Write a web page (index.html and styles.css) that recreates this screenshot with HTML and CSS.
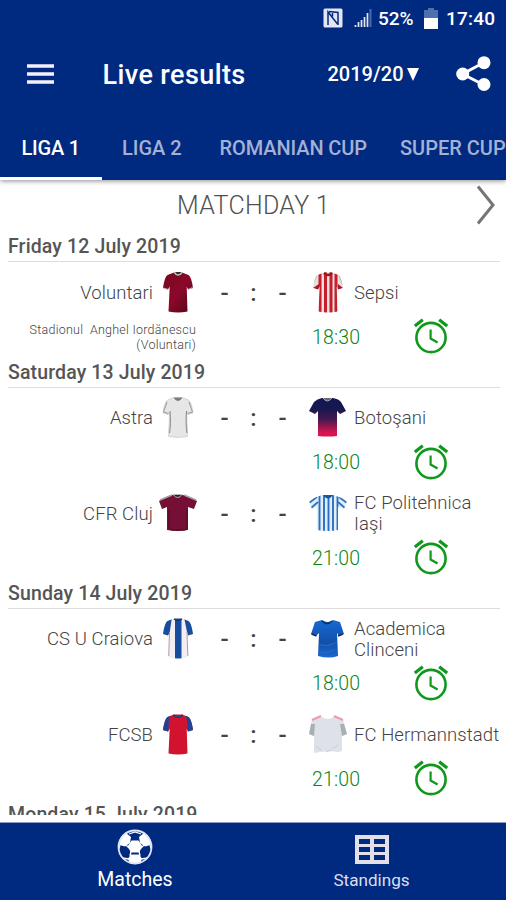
FILE: index.html
```html
<!DOCTYPE html>
<html lang="en">
<head>
<meta charset="utf-8">
<title>Live results</title>
<link rel="stylesheet" href="styles.css">
</head>
<body>
<svg class="defs" aria-hidden="true">
  <defs>
    <symbol id="alarm" viewBox="0 0 36 36">
      <g fill="none" stroke="#0f981b">
        <circle cx="18" cy="19.5" r="14.6" stroke-width="2.6"/>
        <path d="M17.6 11.5v9l7 4" stroke-width="2.2"/>
        <path d="M1.8 8 9.8 1.8M34.2 8 26.2 1.8" stroke-width="3.2"/>
      </g>
    </symbol>
    <linearGradient id="sunset" x1="0" y1="0" x2="0" y2="1">
      <stop offset=".25" stop-color="#141850"/><stop offset=".55" stop-color="#42184f"/><stop offset=".9" stop-color="#da1550"/>
    </linearGradient>
    <linearGradient id="wine" x1="0" y1="0" x2="1" y2="1">
      <stop offset="0" stop-color="#72091f"/><stop offset=".5" stop-color="#8c082a"/><stop offset="1" stop-color="#520516"/>
    </linearGradient>
    <linearGradient id="sky" x1="0" y1="0" x2="0" y2="1">
      <stop offset="0" stop-color="#1769d2"/><stop offset=".6" stop-color="#1250aa"/><stop offset="1" stop-color="#1769d2"/>
    </linearGradient>
    <path id="slim" d="M16 1.500h8l6.500 2.500q3 2 4.500 13l-5 1.500-1.300-3 .8 25q-9.500 2-19 0l1.200-25-1.700 3-5-1.500q1.500-11 4.500-13z"/>
    <clipPath id="slimClip"><use href="#slim"/></clipPath>
    <path id="wide" d="M14 3h11q8 2 14 6l-3 8-6-2v23q-10 2-21 0V15l-5 2-3-8q6-4 13-6z"/>
    <clipPath id="wideClip"><use href="#wide"/></clipPath>
  </defs>
</svg>
<div class="app">
  <header class="header">
    <div class="status">
      <svg width="20" height="20" viewBox="0 0 20 20"><rect x=".5" y=".5" width="19" height="19" rx="1.500" fill="#e3e5f2"/><path d="M5 17V4l9.500 12M6 3.500l9 1V17M9.500 5v3.500" fill="none" stroke="#002a80" stroke-width="1.500"/></svg>
      <svg class="signal" width="18" height="18" viewBox="0 0 18 18"><path d="M1.500 18v-2M4.500 18v-5M7.500 18V11M10.500 18V8M13.500 18V4" stroke="#e3e5f2" stroke-width="1.700"/><path d="M16.500 18V0" stroke="#4a68a8" stroke-width="2"/></svg>
      <span class="percent">52%</span>
      <svg class="battery" width="14" height="21" viewBox="0 0 14 21"><path d="M0 2h4V0h6v2h4v9H0z" fill="#4f70ad"/><path d="M0 10h14v11H0z" fill="#fff"/></svg>
      <span class="clock">17:40</span>
    </div>
    <div class="toolbar">
      <svg class="menu" width="27" height="20" viewBox="0 0 27 20"><path d="M0 2h27M0 10h27M0 18h27" stroke="#f5effa" stroke-width="3.600"/></svg>
      <h1>Live results</h1>
      <div class="season"><span>2019/20</span><svg width="12" height="13" viewBox="0 0 12 13"><path d="M0 0h12L6 13z" fill="#fff"/></svg></div>
      <svg class="share" width="35" height="36" viewBox="0 0 35 36"><path d="M28 6.500 6.500 18 28 29" fill="none" stroke="#fff" stroke-width="3"/><g fill="#fff"><circle cx="28" cy="6.700" r="6.500"/><circle cx="6.700" cy="18" r="6.500"/><circle cx="28" cy="28.500" r="6.500"/></g></svg>
    </div>
    <nav class="tabs">
      <span class="tab active">LIGA 1</span>
      <span class="tab liga2">LIGA 2</span>
      <span class="tab romanian">ROMANIAN CUP</span>
      <span class="tab super">SUPER CUP</span>
    </nav>
  </header>

  <main class="content">
    <div class="matchday"><span>MATCHDAY 1</span>
      <svg class="next" width="20" height="40" viewBox="0 0 20 40"><path d="M2 1.500 17 20 2 38.500" fill="none" stroke="#757575" stroke-width="3"/></svg>
    </div>

    <h2 class="d1">Friday 12 July 2019</h2>
    <article class="match">
      <div class="teams">
        <span class="home">Voluntari</span>
        <svg class="shirt" viewBox="0 0 40 42"><use href="#slim" fill="url(#wine)"/><path d="m5.500 17 4.500 1.500M34.500 16.500l-4.500 2" stroke="#d9aeb8" stroke-width="1"/><path d="M16 1q4 6 8.500 0" fill="#333" stroke="#c7c2bb" stroke-width="1.500"/></svg>
        <span class="score"><i>-</i><i>:</i><i>-</i></span>
        <svg class="shirt" viewBox="0 0 40 42"><g clip-path="url(#slimClip)"><path d="M0 0h40v42H0z" fill="#e8dfe0"/><path d="M12 0v42M17.500 0v42M23 0v42M28 0v42" stroke="#c51f2b" stroke-width="3"/><path d="m5 17 6 2v-6zM35 17l-5 2v-6z" fill="#a91926"/><path d="M4 14 9 4M35 14 31 4" stroke="#bdb8b8" stroke-width="1.500"/></g><path d="M16 2q4 4 8 0" fill="none" stroke="#981a22" stroke-width="2.500"/></svg>
        <span class="away sepsi">Sepsi</span>
      </div>
      <div class="info"><span class="venue">Stadionul&nbsp; Anghel Iordănescu<br>(Voluntari)</span><time>18:30</time><svg class="alarm"><use href="#alarm"/></svg></div>
    </article>

    <h2 class="d2">Saturday 13 July 2019</h2>
    <article class="match">
      <div class="teams">
        <span class="home">Astra</span>
        <svg class="shirt" viewBox="0 0 40 42"><use href="#slim" fill="#e6e6e6" stroke="#c8c8c8" stroke-width=".7"/><path d="M12 15q1 14-.5 22M28.500 15q-1 14 .5 22" fill="none" stroke="#888" stroke-width="1"/><path d="m9 6-3.500 10 5 1.500M31 6l3.500 10-5 1.500" fill="none" stroke="#999" stroke-width="1"/><path d="M16 2q4 5 8 0z" fill="#777" stroke="#888"/></svg>
        <span class="score"><i>-</i><i>:</i><i>-</i></span>
        <svg class="shirt" viewBox="0 0 40 42"><path d="M14 2h11q6 1 8 4l5 9-6 3-3-3v25q-9 1-19 0V15l-3 3-6-3 5-9q3-3 8-4z" fill="url(#sunset)"/><path d="M15 2q4 6 9 0" fill="#6b6470" stroke="#aaa" stroke-width="1"/></svg>
        <span class="away botosani">Botoşani</span>
      </div>
      <div class="info"><span class="venue"></span><time>18:00</time><svg class="alarm"><use href="#alarm"/></svg></div>
    </article>
    <article class="match">
      <div class="teams">
        <span class="home">CFR Cluj</span>
        <svg class="shirt" viewBox="0 0 40 42"><use href="#wide" fill="#760f36"/><path d="m2 8 12-5M26 3l12 5" stroke="#aaa1a5" stroke-width="1.500"/><path d="M11 18v18l2 2h14l2-2V18" fill="none" stroke="#4e0923" stroke-width="1"/><path d="M15 2.500q5 6 9 0z" fill="#222" stroke="#bdb6b9" stroke-width="1"/></svg>
        <span class="score"><i>-</i><i>:</i><i>-</i></span>
        <svg class="shirt" viewBox="0 0 40 42"><g clip-path="url(#wideClip)"><path d="M0 0h40v42H0z" fill="#e2effa"/><path d="M11.500 2v40M16 2v40M20.500 2v40M25 2v40M29.500 2v40" stroke="#2970c0" stroke-width="1.900"/><path d="m1 11 8-6M3 16l7-6M39 11l-8-6M37 16l-7-6" stroke="#3172bb" stroke-width="1.800"/></g><path d="M15 3q5 7 10 0z" fill="#1b579e"/></svg>
        <span class="away iasi">FC Politehnica<br>Iaşi</span>
      </div>
      <div class="info"><span class="venue"></span><time>21:00</time><svg class="alarm"><use href="#alarm"/></svg></div>
    </article>

    <h2 class="d3">Sunday 14 July 2019</h2>
    <article class="match">
      <div class="teams">
        <span class="home">CS U Craiova</span>
        <svg class="shirt" viewBox="0 0 40 42"><g clip-path="url(#slimClip)"><path d="M0 0h40v42H0z" fill="#f1eff4"/><path d="M17 0h6.500v42h-6.500zM0 0h14L11 20H3zM40 0H26l4 20h7z" fill="#174d9c"/></g><path d="m11.500 15-.8 24M29 15l.8 24" stroke="#b79aa0" stroke-width="1"/><path d="M16 2q4 3 8 0" stroke="#16356b" fill="none" stroke-width="1.500"/></svg>
        <span class="score"><i>-</i><i>:</i><i>-</i></span>
        <svg class="shirt" viewBox="0 0 40 42"><path d="M14 3q6 4 11 0l7 2 4 12-5 2-2-3 1 23q-9 3-20 0l1-23-3 3-5-2 4-12z" fill="url(#sky)"/><path d="M14 4q5 5 10 0" fill="none" stroke="#102d57" stroke-width="1.500"/><path d="m30 19 5-2M3.500 17l5 2" stroke="#153157" stroke-width="1.500"/><path d="M11 27q8 4 18-2M11 35q8 2 16-2" fill="none" stroke="#2a6cc5" stroke-width="1"/></svg>
        <span class="away academica">Academica<br>Clinceni</span>
      </div>
      <div class="info"><span class="venue"></span><time>18:00</time><svg class="alarm"><use href="#alarm"/></svg></div>
    </article>
    <article class="match">
      <div class="teams">
        <span class="home">FCSB</span>
        <svg class="shirt" viewBox="0 0 40 42"><g clip-path="url(#slimClip)"><path d="M0 0h40v42H0z" fill="#d1132f"/><path d="M0 0h14q-5 8-3 19H2zM40 0H26q5 8 3 19h9z" fill="#1d4495"/></g><path d="M15 2q5 4 10 0" fill="none" stroke="#293d77" stroke-width="1.700"/></svg>
        <span class="score"><i>-</i><i>:</i><i>-</i></span>
        <svg class="shirt" viewBox="0 0 40 42"><path d="M12 3q8 6 15 0l8 3 4 15-5 2v15l-4 1q-10-2-24 1V23l-5-2L4 6z" fill="#dfe1e8"/><path d="M3 11 1 21l5 2 1-12zM36 11l3 10-5 2-2-12z" fill="#a9b0b5"/><path d="m4 7 9-4M26 3l9 4" stroke="#ec9da9" stroke-width="2"/><path d="m8 33 5 4M30 32l-6 4M18 39l5-2" stroke="#c8ccd6"/></svg>
        <span class="away hermann">FC Hermannstadt</span>
      </div>
      <div class="info"><span class="venue"></span><time>21:00</time><svg class="alarm"><use href="#alarm"/></svg></div>
    </article>
    <h2 class="d4">Monday 15 July 2019</h2>
  </main>

  <footer class="bottom">
    <div class="item matches">
      <svg width="36" height="36" viewBox="0 0 36 36"><defs><clipPath id="ball"><circle cx="18" cy="18" r="17.200"/></clipPath></defs><g clip-path="url(#ball)" fill="#fff"><path d="m14.500 11.500h7l4 6-3.500 6h-8l-3.500-6z"/><path d="m3 6 6-2 5 4-1 6-5 3.500-5.500-1.500-1.500-5zM33 6l-6-2-5 4 1 6 5 3.500 5.500-1.500 1.500-5z"/><path d="m14 25.500h8l3 4-2 6H13l-2-6z"/><path d="m9 16 3 3M27 16l-3 3M14 22l-1 5M22 22l1 5M12 5l6-2 6 2M3 16l-2 6M33 16l2 6M5 29l7 1M31 29l-7 1" fill="none" stroke="#fff" stroke-width="1.300"/></g><circle cx="18" cy="18" r="16.500" fill="none" stroke="#dfe5f5" stroke-width="1.800"/></svg>
      <span>Matches</span>
    </div>
    <div class="item standings">
      <svg width="34" height="29" viewBox="0 0 34 29"><path fill="#e2deea" fill-rule="evenodd" d="M0 0h34v29H0zM4 4v5h11V4zM19 4v5h11V4zM4 12v5h11v-5zM19 12v5h11v-5zM4 20v5h11v-5zM19 20v5h11v-5z"/></svg>
      <span>Standings</span>
    </div>
  </footer>
</div>
</body>
</html>
```
FILE: styles.css
```css
* { box-sizing: border-box; }
body { margin: 0; font-family: Roboto, "Liberation Sans", sans-serif; color: #666; }
svg { display: block; flex: none; }
h1, h2 { margin: 0; font-weight: 500; }
.defs { position: absolute; width: 0; height: 0; }
.app { width: 506px; height: 900px; display: flex; flex-direction: column; overflow: hidden; background: #fff; }

.header { flex: none; height: 180px; background: #002a80; color: #fff; box-shadow: 0 1px 5px rgba(0, 0, 0, .45); position: relative; white-space: nowrap; }
.status { height: 36px; display: flex; align-items: center; justify-content: flex-end; padding-right: 10px; font-size: 19px; font-weight: 500; }
.signal { margin-left: 11px; }
.percent { margin-left: 6px; width: 38px; }
.battery { margin-left: 8px; }
.clock { margin-left: 8px; width: 50px; letter-spacing: .2px; }
.toolbar { height: 77px; display: flex; align-items: center; padding-left: 26.500px; }
.toolbar h1 { margin-left: 49px; width: 225px; font-size: 27px; line-height: 32px; letter-spacing: .4px; padding-top: 1px; }
.menu { margin-top: -2px; }
.season { display: flex; align-items: center; gap: 3px; width: 128px; font-size: 20px; font-weight: 500; margin-top: -1px; }
.share { margin-top: -2px; }
.tabs { height: 67px; display: flex; font-size: 20px; font-weight: 500; line-height: 70px; color: #a4b1d5; }
.tab { flex: none; height: 67px; }
.active { width: 102px; padding-left: 21.500px; letter-spacing: -.2px; color: #fff; border-bottom: 3px solid #fff; }
.liga2 { width: 97.500px; padding-left: 20px; }
.romanian { width: 180.500px; padding-left: 20px; letter-spacing: -.1px; }
.super { padding-left: 20px; }

.content { height: 634.500px; flex: none; overflow: hidden; }
.matchday { height: 51px; display: flex; align-items: center; justify-content: flex-end; padding-right: 10px; font-size: 25px; font-weight: 300; color: #505050; }
.next { margin-top: -2px; }
.matchday span { width: 299px; letter-spacing: .3px; }
.content h2 { height: 31px; margin: 0 6px 0 8px; border-bottom: 1.500px solid #ddd; font-size: 19.500px; line-height: 32px; letter-spacing: .13px; color: #555; }
.content .match + h2 { height: 30px; line-height: 30px; }
.match { height: 95.500px; }
.teams { height: 62px; display: grid; grid-template-columns: 153px 5px 40px 110px 40px 6px 1fr; align-items: center; font-size: 18.500px; font-weight: 300; line-height: 21px; letter-spacing: .08px; color: #444; }
.home { grid-column: 1; text-align: right; }
.shirt { grid-column: 3; width: 40px; height: 42px; margin-top: -3px; }
.score { grid-column: 4; display: grid; grid-template-columns: 1fr 1fr 1fr; padding: 0 11px 0 12px; text-align: center; font-size: 24px; font-weight: 500; }
.score i { font-style: normal; }
.score + .shirt { grid-column: 5; }
.away { grid-column: 7; white-space: nowrap; }
.info { height: 26px; display: grid; grid-template: 26px / 196px 116px 100.500px 36px; align-items: center; }
.venue { text-align: right; font-size: 12.500px; font-weight: 300; line-height: 15px; letter-spacing: .25px; color: #444; }
time { grid-column: 3; font-size: 19.500px; font-weight: 300; letter-spacing: .15px; color: #0b8517; }
.alarm { width: 36px; height: 36px; margin: -6px 0 -4px; }

.bottom { height: 78.500px; margin-top: 7px; display: flex; background: #002a80; border-top: 1px solid #8f99c4; flex: none; }
.item { flex: none; display: flex; flex-direction: column; align-items: center; color: #fff; }
.matches { width: 270px; padding-top: 6px; font-size: 19.500px; }
.matches span { margin-top: 3px; }
.standings { width: 203px; padding-top: 12px; color: #d9def0; font-size: 17.100px; }
.standings span { margin-top: 6px; }
```
